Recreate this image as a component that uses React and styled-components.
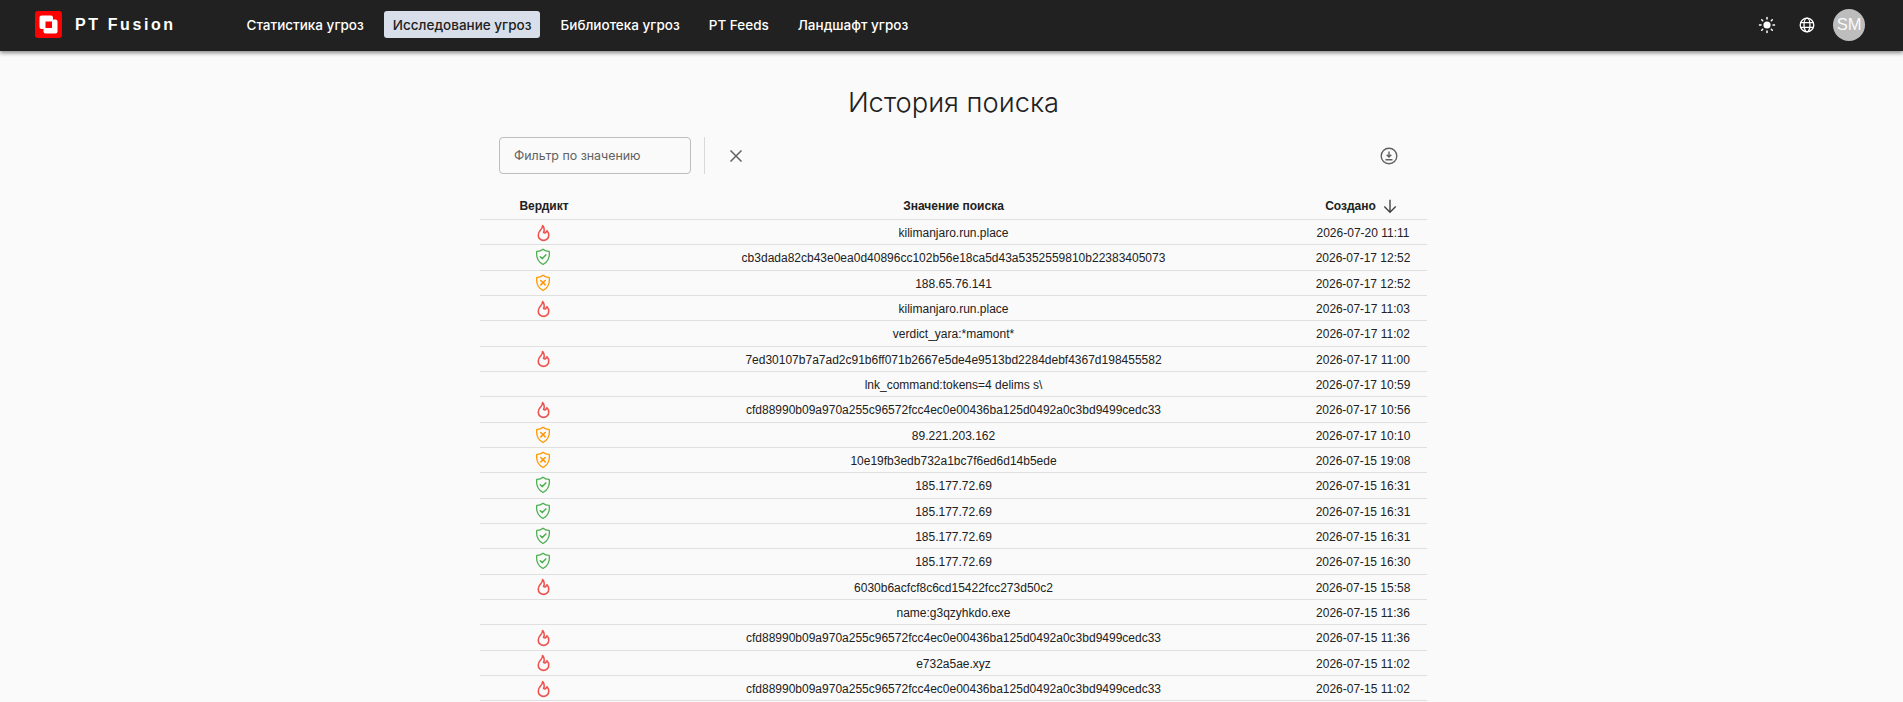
import React from "react"
import styled, { createGlobalStyle } from "styled-components"

const GlobalStyle = createGlobalStyle`
	html, body {
		margin: 0;
		padding: 0;
		height: 100%;
		overflow: hidden;
		background: #fafafa;
		font-family: "Liberation Sans", Arial, sans-serif;
	}
`

const Header = styled.header`
	position: relative;
	z-index: 2;
	display: flex;
	align-items: center;
	box-sizing: border-box;
	height: 51px;
	padding: 0 38px 2px 35px;
	background: #212121;
	box-shadow: 0 2px 4px rgba(0, 0, 0, 0.45);
`

const Logo = styled.div`
	display: flex;
	align-items: center;
	gap: 13px;
	width: 203px;
	color: #fff;
	font-family: "Liberation Sans", sans-serif;
	font-weight: 700;
	font-size: 16px;
	letter-spacing: 2.6px;
`

const Nav = styled.nav`
	display: flex;
	align-items: center;
	gap: 12px;
	flex: 1;
`

const NavItem = styled.a`
	display: flex;
	align-items: center;
	height: 27px;
	padding: 0 8.5px;
	border-radius: 3px;
	font-family: Inter, sans-serif;
	font-size: 13.5px;
	font-weight: 500;
	color: ${(p) => (p.$active ? "#212121" : "#fff")};
	background: ${(p) => (p.$active ? "#d8dfeb" : "transparent")};
`

const HeaderIcons = styled.div`
	display: flex;
	align-items: center;
	color: #fff;
`

const HeaderIcon = styled.div`
	display: flex;
	justify-content: center;
	width: 40px;
`

const Avatar = styled.div`
	display: flex;
	align-items: center;
	justify-content: center;
	width: 32px;
	height: 32px;
	margin-left: 6px;
	border-radius: 50%;
	background: #bdbdbd;
	color: #fafafa;
	font-size: 16.5px;
`

const Main = styled.main`
	width: 947px;
	margin-left: 480px;
`

const Title = styled.h1`
	margin: 0;
	padding-top: 36px;
	height: 50px;
	line-height: 32px;
	text-align: center;
	font-family: Inter, sans-serif;
	font-size: 27.3px;
	font-weight: 300;
	color: #212121;
`

const Toolbar = styled.div`
	display: flex;
	align-items: center;
	height: 37px;
	padding: 0 29px 0 19px;
`

const FilterInput = styled.div`
	display: flex;
	align-items: center;
	box-sizing: border-box;
	width: 192px;
	height: 37px;
	padding-left: 14px;
	border: 1px solid #bdbdbd;
	border-radius: 4px;
	font-family: Inter, sans-serif;
	font-size: 12.4px;
	color: #616161;
`

const Divider = styled.div`
	width: 1px;
	height: 37px;
	margin: 0 24px 0 13px;
	background: #d9d9d9;
`

const IconButton = styled.div`
	display: flex;
	color: #616161;
	margin-left: ${(p) => (p.$end ? "auto" : "0")};
`

const Table = styled.div`
	margin-top: 16px;
`

const gridColumns = "128px 1fr 128px"

const HeadRow = styled.div`
	display: grid;
	grid-template-columns: ${gridColumns};
	align-items: center;
	height: 30px;
	padding-top: 1px;
	border-bottom: 1px solid #e0e0e0;
	box-sizing: border-box;
	font-size: 12px;
	font-weight: 700;
	color: #212121;
`

const Row = styled.div`
	display: grid;
	grid-template-columns: ${gridColumns};
	align-items: center;
	height: 25.33px;
	border-bottom: 1px solid #e0e0e0;
	box-sizing: border-box;
	font-size: 12px;
	color: #212121;
`

const Cell = styled.div`
	display: flex;
	align-items: center;
	justify-content: center;
	gap: 6px;
	padding-top: 2px;
	white-space: nowrap;
`

const IconCell = styled(Cell)`
	padding: 0 2px 0 0;
`

const SortCell = styled(Cell)`
	padding-right: 3px;
`

const Flame = () => (
	<svg width="21" height="21" viewBox="0 0 24 24" fill="none" stroke="#ef5350" strokeWidth="1.800" strokeLinejoin="round" strokeLinecap="round">
		<path d="M12 12c2-2.960 0-7-1-8 0 3.038-1.773 4.741-3 6-1.226 1.260-2 3.240-2 5a6 6 0 1 0 12 0c0-1.532-1.056-3.940-2-5-1.786 3-2.791 3-4 2z" />
	</svg>
)

const ShieldPath = "M8 1.200c1.700 1.500 3.800 2.300 6.200 2.200.8 5.500-1.500 10.500-6.200 13.100C3.300 13.900 1 8.900 1.800 3.400 4.200 3.500 6.300 2.700 8 1.200z"

const ShieldOk = () => (
	<svg width="16" height="18" viewBox="0 0 16 18" fill="none" stroke="#4caf50" strokeWidth="1.300" strokeLinejoin="round" strokeLinecap="round">
		<path d={ShieldPath} />
		<path d="M5.300 8.700 7.300 10.600 10.800 6.900" strokeWidth="1.500" />
	</svg>
)

const ShieldWarn = () => (
	<svg width="16" height="18" viewBox="0 0 16 18" fill="none" stroke="#ff9800" strokeWidth="1.300" strokeLinejoin="round" strokeLinecap="round">
		<path d={ShieldPath} />
		<path d="M5.800 6.500 10.200 10.900M10.200 6.500 5.800 10.900" strokeWidth="1.500" />
	</svg>
)

const verdictIcons = {
	bad: <Flame />,
	ok: <ShieldOk />,
	warn: <ShieldWarn />,
}

const rows = [
	["bad", "kilimanjaro.run.place", "2026-07-20 11:11"],
	["ok", "cb3dada82cb43e0ea0d40896cc102b56e18ca5d43a5352559810b22383405073", "2026-07-17 12:52"],
	["warn", "188.65.76.141", "2026-07-17 12:52"],
	["bad", "kilimanjaro.run.place", "2026-07-17 11:03"],
	[null, "verdict_yara:*mamont*", "2026-07-17 11:02"],
	["bad", "7ed30107b7a7ad2c91b6ff071b2667e5de4e9513bd2284debf4367d198455582", "2026-07-17 11:00"],
	[null, "lnk_command:tokens=4 delims s\\", "2026-07-17 10:59"],
	["bad", "cfd88990b09a970a255c96572fcc4ec0e00436ba125d0492a0c3bd9499cedc33", "2026-07-17 10:56"],
	["warn", "89.221.203.162", "2026-07-17 10:10"],
	["warn", "10e19fb3edb732a1bc7f6ed6d14b5ede", "2026-07-15 19:08"],
	["ok", "185.177.72.69", "2026-07-15 16:31"],
	["ok", "185.177.72.69", "2026-07-15 16:31"],
	["ok", "185.177.72.69", "2026-07-15 16:31"],
	["ok", "185.177.72.69", "2026-07-15 16:30"],
	["bad", "6030b6acfcf8c6cd15422fcc273d50c2", "2026-07-15 15:58"],
	[null, "name:g3qzyhkdo.exe", "2026-07-15 11:36"],
	["bad", "cfd88990b09a970a255c96572fcc4ec0e00436ba125d0492a0c3bd9499cedc33", "2026-07-15 11:36"],
	["bad", "e732a5ae.xyz", "2026-07-15 11:02"],
	["bad", "cfd88990b09a970a255c96572fcc4ec0e00436ba125d0492a0c3bd9499cedc33", "2026-07-15 11:02"],
]

const App = () => (
	<>
		<GlobalStyle />
		<Header>
			<Logo>
				<svg width="27" height="27" viewBox="0 0 27 27">
					<rect width="27" height="27" rx="3" fill="#f00" />
					<rect x="4.500" y="4.500" width="13.500" height="13.500" rx="2" fill="#fff" />
					<rect x="8.500" y="8.500" width="14" height="14" rx="2" fill="#fff" />
					<rect x="10.500" y="10.500" width="6.500" height="6.500" fill="#f00" />
				</svg>
				PT Fusion
			</Logo>
			<Nav>
				<NavItem>Статистика угроз</NavItem>
				<NavItem $active>Исследование угроз</NavItem>
				<NavItem>Библиотека угроз</NavItem>
				<NavItem>PT Feeds</NavItem>
				<NavItem>Ландшафт угроз</NavItem>
			</Nav>
			<HeaderIcons>
				<HeaderIcon>
					<svg width="18" height="18" viewBox="0 0 18 18" fill="#fff" stroke="#fff" strokeWidth="1.500" strokeLinecap="round">
						<circle cx="9" cy="9" r="3.600" stroke="none" />
						<path d="M9 1.500v1.500M9 15v1.500M1.500 9H3M15 9h1.500M3.700 3.700l1 1M13.300 13.300l1 1M3.700 14.300l1-1M13.300 4.700l1-1" />
					</svg>
				</HeaderIcon>
				<HeaderIcon>
					<svg width="16" height="16" viewBox="0 0 16 16" fill="none" stroke="#fff" strokeWidth="1.300">
						<circle cx="8" cy="8" r="6.800" />
						<ellipse cx="8" cy="8" rx="3" ry="6.800" />
						<path d="M1.500 5.700h13M1.500 10.300h13" />
					</svg>
				</HeaderIcon>
				<Avatar>SM</Avatar>
			</HeaderIcons>
		</Header>
		<Main>
			<Title>История поиска</Title>
			<Toolbar>
				<FilterInput>Фильтр по значению</FilterInput>
				<Divider />
				<IconButton>
					<svg width="14" height="14" viewBox="0 0 14 14" stroke="currentColor" strokeWidth="1.500">
						<path d="M1.500 1.500 12.500 12.500M12.500 1.500 1.500 12.500" />
					</svg>
				</IconButton>
				<IconButton $end>
					<svg width="18" height="18" viewBox="0 0 18 18" fill="none" stroke="currentColor" strokeWidth="1.400">
						<circle cx="9" cy="9" r="7.800" />
						<path d="M9 4.500v5M6.700 7.700 9 10l2.300-2.300M5.500 12.800h7" />
					</svg>
				</IconButton>
			</Toolbar>
			<Table>
				<HeadRow>
					<Cell>Вердикт</Cell>
					<Cell>Значение поиска</Cell>
					<SortCell>
						Создано
						<svg width="16" height="16" viewBox="0 0 14 14" fill="none" stroke="#424242" strokeWidth="1.200">
							<path d="M7 1.500v11M2 7.500l5 5 5-5" />
						</svg>
					</SortCell>
				</HeadRow>
				{rows.map(([verdict, value, created], i) => (
					<Row key={i}>
						<IconCell>{verdictIcons[verdict]}</IconCell>
						<Cell>{value}</Cell>
						<Cell>{created}</Cell>
					</Row>
				))}
			</Table>
		</Main>
	</>
)

export default App
